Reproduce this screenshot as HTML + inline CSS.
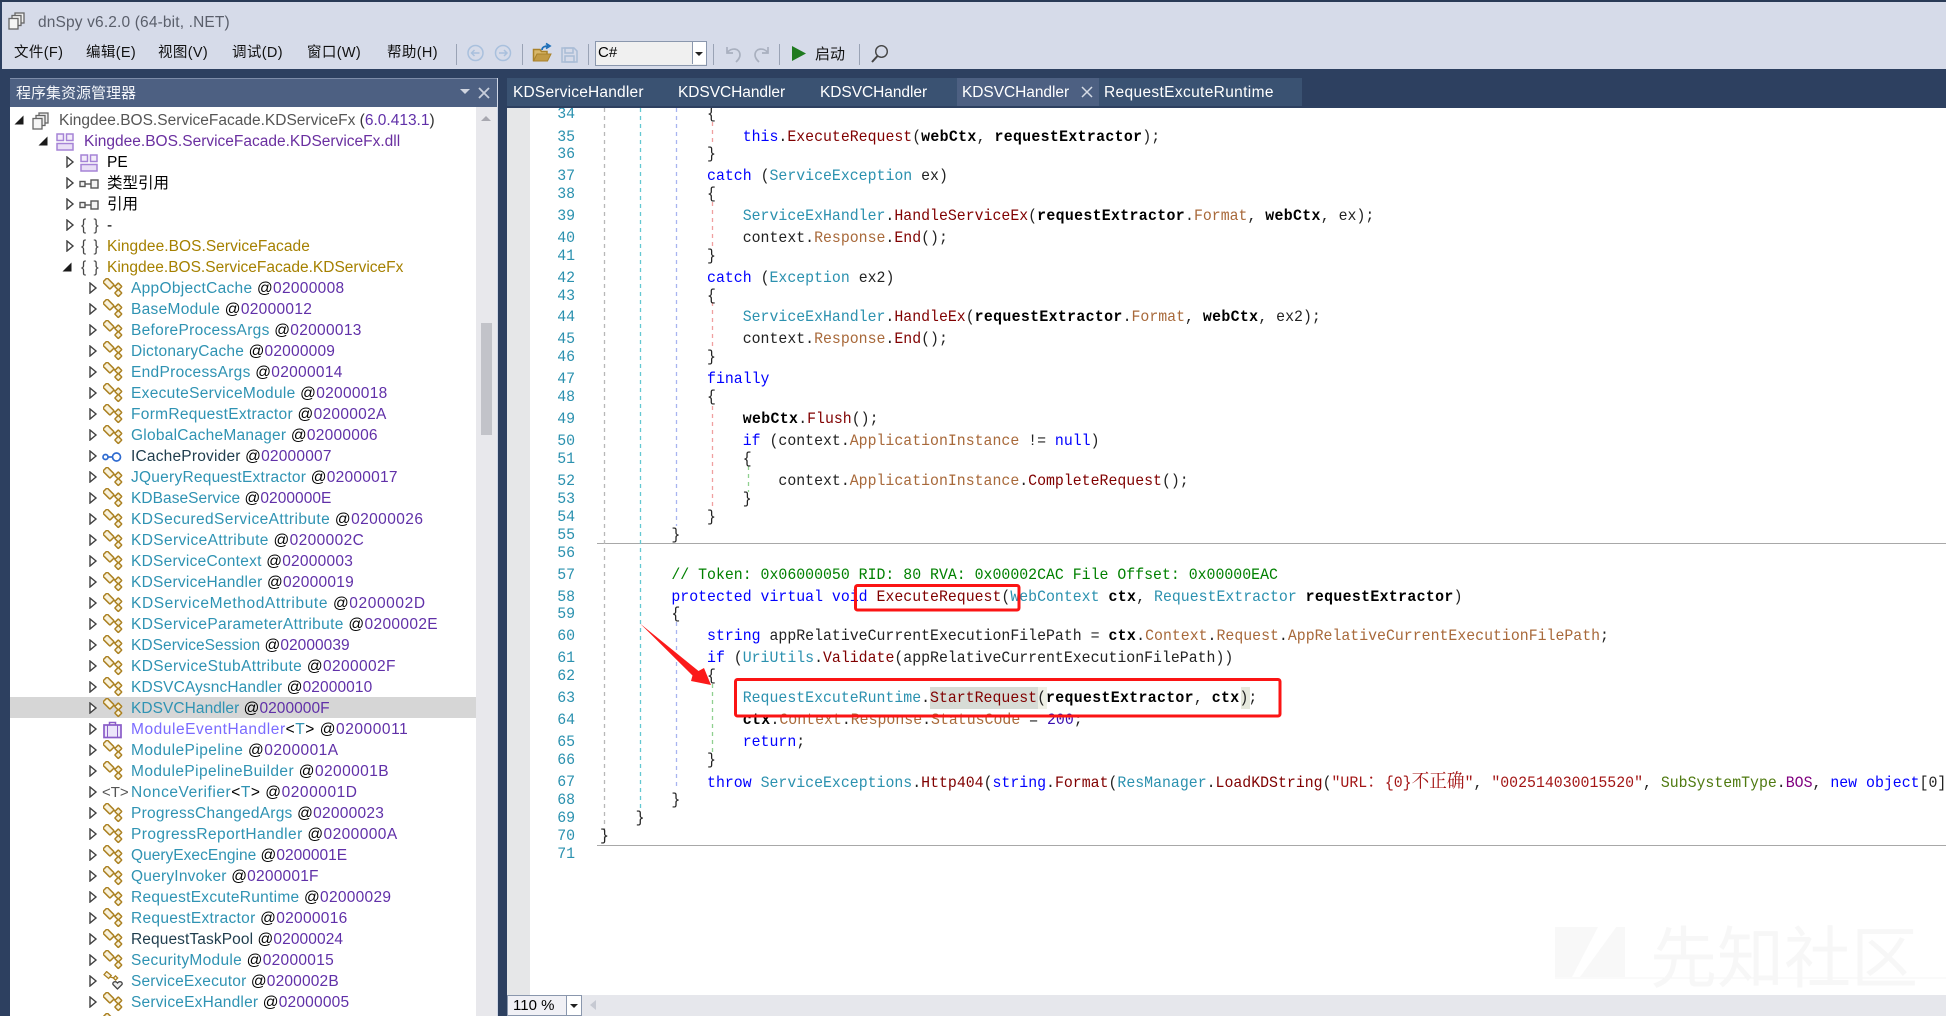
<!DOCTYPE html>
<html lang="zh"><head><meta charset="utf-8"><title>dnSpy</title>
<style>
html,body{margin:0;padding:0}
body{width:1946px;height:1016px;overflow:hidden;position:relative;background:#2d4060;font-family:"Liberation Sans","Noto Sans CJK SC",sans-serif;color:#000}
div,span,svg{box-sizing:border-box}
.abs,.m,.sep,.tb{position:absolute}
#top{left:0;top:0;width:1946px;height:2px;background:#293a56}
#bar{left:2px;top:2px;width:1944px;height:67px;background:#d6dbe9}
.m{top:42px;font-size:14.5px;line-height:22px;color:#111;white-space:nowrap;letter-spacing:.35px}
.sep{width:1px;top:44px;height:21px;background:#9aa3b5}
#panel{left:10px;top:78px;width:488px;height:938px;background:#fff;overflow:hidden}
#ph{position:absolute;left:0;top:0;width:488px;height:29px;background:#4d6082;border-top:1px solid #7d8ca8}
#tree{position:absolute;left:-10px;top:31px;width:476px}
.r{position:relative;height:21px;line-height:24px;font-size:15.5px;letter-spacing:.3px;white-space:nowrap}
.r u{text-decoration:none;color:#2f93b3}
.r s{text-decoration:none;color:#6030a8}
.r svg{position:absolute;overflow:visible;margin-top:1px}
.l0{padding-left:59px}.l1{padding-left:84px}.l2{padding-left:107px}.l3{padding-left:131px}
.e{width:10px;height:12px;top:4px}
.ns{position:absolute;left:81px;color:#444;letter-spacing:1.5px}
#sb{position:absolute;left:466px;top:29px;width:21px;height:909px;background:#e8e8ec}
#tabs{left:507px;top:78px;width:795px;height:28px;background:#3a5272}
.tb{top:78px;height:28px;line-height:30px;font-size:15.5px;color:#fff;letter-spacing:.35px;white-space:nowrap}
#ed{left:507px;top:108px;width:1439px;height:887px;background:#fff;overflow:hidden}
#gut{position:absolute;left:0;top:0;width:23px;height:887px;background:#e6e7e8}
#code{position:absolute;left:-507px;top:-108px;width:1946px;height:1016px}
.l{position:absolute;left:599.5px;width:1600px;height:20px;line-height:20px;margin-top:1px;font-family:"Liberation Mono","Noto Serif CJK SC",monospace;font-size:16px;white-space:pre;color:#222;transform:scaleX(.929);transform-origin:0 0}
.l i{position:absolute;left:-46px;top:0;font-style:normal;color:#2b91af}
.l b{color:#000;letter-spacing:.35px}
.k{color:#0000ff}.y{color:#2b91af}.f{color:#800000}.p{color:#a8693a}.c{color:#008000}.q{color:#a31515}.n{color:#3a10b0}.en{color:#4f7a10}.ev{color:#800080}
.cj{font-family:"Noto Serif CJK SC",serif;font-size:19px;line-height:16px}
.hl{position:absolute}
#botbar{left:507px;top:995px;width:1439px;height:21px;background:#e6e7ec}
#wm{left:1650px;top:919px;font-size:67px;line-height:70px;color:#f7f7f7;white-space:nowrap;font-family:"Noto Sans CJK SC",sans-serif}
</style></head><body>
<svg width="0" height="0" style="position:absolute">
<defs>
<symbol id="cl" viewBox="0 0 10 12"><path d="M1 1 7 6 1 11Z" fill="#fff" stroke="#404040" stroke-width="1.4"/></symbol>
<symbol id="op" viewBox="0 0 10 12"><path d="M9.500 1.500V10.500H.5Z" fill="#1a1a1a"/></symbol>
<symbol id="k" viewBox="0 0 20 20"><g fill="#f9f2dc" stroke="#ab8122" stroke-width="1.500"><path d="M8 7 15.300 8.500V15" fill="none"/><rect x=".5" y="2.500" width="10" height="6" rx="1" transform="rotate(45 5.500 5.500)"/><rect x="12.800" y="6" width="5" height="5" rx=".7" transform="rotate(45 15.300 8.500)"/><rect x="12.800" y="12.500" width="5" height="5" rx=".7" transform="rotate(45 15.300 15)"/></g></symbol>
<symbol id="as" viewBox="0 0 18 18"><g fill="#f0f0f0" stroke="#666" stroke-width="1.300"><rect x="7" y="1" width="9" height="10"/><rect x="4" y="3.500" width="9" height="10"/><rect x="1" y="6.500" width="9" height="10.500" fill="#f5f5f5"/></g></symbol>
<symbol id="dl" viewBox="0 0 18 18"><g fill="#f3ecfa" stroke="#a583d6" stroke-width="1.500"><rect x="1" y="1" width="6.500" height="6.500"/><rect x="10.500" y="1" width="6.500" height="6.500"/><rect x="1" y="10.500" width="16" height="6.500" fill="#e9dff6"/></g></symbol>
<symbol id="rf" viewBox="0 0 20 14"><g fill="#f3f3f3" stroke="#555" stroke-width="1.400"><path d="M6 7H12"/><rect x="1" y="4.500" width="5" height="5"/><rect x="12" y="3" width="7" height="8"/></g></symbol>
<symbol id="bc" viewBox="0 0 20 20"><rect x="1" y="5" width="17" height="12.500" fill="#ece6fa" stroke="#8a5cc8" stroke-width="1.700"/><path d="M6.500 5V2.500H12.500V5" fill="none" stroke="#8a5cc8" stroke-width="1.500"/><path d="M4.500 5V17.500M14.500 5V17.500" stroke="#8a5cc8" stroke-width="1"/></symbol>
<symbol id="if" viewBox="0 0 20 12"><g fill="#fff" stroke="#2f6bd0" stroke-width="1.700"><path d="M6 6H13"/><circle cx="3.500" cy="6" r="2.500"/><circle cx="14.500" cy="6" r="4"/></g></symbol>
<symbol id="hb" viewBox="0 0 20 20"><g fill="#f9f2dc" stroke="#ab8122" stroke-width="1.300"><path d="M7 6 13 7.500" fill="none"/><rect x="1.500" y="2" width="6" height="4" transform="rotate(40 4.500 4.200)"/><rect x="11" y="5.500" width="3" height="3" transform="rotate(45 12.500 7)"/></g><path d="M14.500 18 10 13.500C9 11 12.500 9.500 14.500 12 16.500 9.500 20 11 19 13.500Z" fill="#eee" stroke="#444" stroke-width="1.300"/></symbol>
</defs></svg>

<div class="abs" id="top"></div>
<div class="abs" id="bar"></div>
<svg class="abs" style="left:8px;top:12px" width="18" height="18"><use href="#as"/></svg>
<div class="abs" style="left:38px;top:12px;font-size:15.5px;line-height:22px;color:#5a5f6b;letter-spacing:.15px;white-space:nowrap">dnSpy v6.2.0 (64-bit, .NET)</div>
<div class="m" style="left:14px">文件(F)</div>
<div class="m" style="left:86px">编辑(E)</div>
<div class="m" style="left:158px">视图(V)</div>
<div class="m" style="left:232px">调试(D)</div>
<div class="m" style="left:307px">窗口(W)</div>
<div class="m" style="left:387px">帮助(H)</div>
<div class="sep" style="left:456px"></div><div class="sep" style="left:522px"></div><div class="sep" style="left:588px"></div><div class="sep" style="left:713px"></div><div class="sep" style="left:779px"></div><div class="sep" style="left:859px"></div>
<svg class="abs" style="left:460px;top:40px" width="440" height="28" viewBox="460 40 440 28" fill="none">
<g stroke="#a9c0dd" stroke-width="1.500"><circle cx="475.500" cy="53" r="7.500"/><path d="M479.500 53H471.500M474.500 50 471.500 53 474.500 56"/><circle cx="503" cy="53" r="7.500"/><path d="M499 53H507M504 50 507 53 504 56"/></g>
<path d="M533.500 61V49.500H540L541.500 51.500H547V54" stroke="#a9822a" stroke-width="1.500" fill="#d8b76a"/><path d="M533.500 61 537 54H551L547.500 61Z" fill="#c19a45" stroke="#a9822a"/>
<path d="M542 50C542 47 545 46 548 46M546 43.500 550 46 546 48.500" stroke="#1e6fb8" stroke-width="1.700"/>
<g stroke="#a9bcd6" stroke-width="1.500"><path d="M562 48H574L577 51V62H562Z"/><rect x="565" y="48" width="8" height="5"/><rect x="565" y="56" width="9" height="6"/></g>
<path d="M727 47V53H733M727 53C731 47 740 48 740 55 740 58 738 60 736 62" stroke="#a9b0bf" stroke-width="1.700"/>
<path d="M768 47V53H762M768 53C764 47 755 48 755 55 755 58 757 60 759 62" stroke="#a9b0bf" stroke-width="1.700"/>
<path d="M792 46 806 53.500 792 61Z" fill="#1f7a1f"/>
<circle cx="881.500" cy="51.500" r="5.800" stroke="#444" stroke-width="1.400"/><path d="M877.500 56 872 62" stroke="#444" stroke-width="2"/>
</svg>
<div class="abs" style="left:595px;top:41px;width:112px;height:25px;background:#f0f0f0;border:1.500px solid #8a97ad;font-size:15px;line-height:21px;padding-left:2px">C#<div class="abs" style="left:96px;top:0;width:14px;height:22px;background:#fff;border-left:1px solid #8a97ad"></div><div class="abs" style="left:99px;top:10px;border:4px solid transparent;border-top:4px solid #222;border-bottom:0"></div></div>
<div class="m" style="left:815px;top:44px;font-size:15px;letter-spacing:0">启动</div>

<div class="abs" id="panel">
<div id="ph"><div class="abs" style="left:6px;top:4px;font-size:15px;line-height:22px;color:#f4f6fa;white-space:nowrap">程序集资源管理器</div>
<div class="abs" style="left:450px;top:10px;border:5px solid transparent;border-top:5px solid #d0d5e0;border-bottom:0"></div>
<svg class="abs" style="left:467px;top:8px" width="14" height="12"><path d="M2 1 12 11M12 1 2 11" stroke="#c8cedb" stroke-width="1.800"/></svg></div>
<div id="sb"><div class="abs" style="left:5px;top:9px;border:5.500px solid transparent;border-bottom:5.500px solid #a8a8b0;border-top:0"></div><div class="abs" style="left:5px;top:216px;width:11px;height:112px;background:#c2c3c9"></div></div>
<div class="abs" style="left:487px;top:0;width:1px;height:938px;background:#cfd6e5"></div>
<div id="tree">
<div class="r l0" style="letter-spacing:0"><svg class="e" style="left:14px"><use href="#op"/></svg><svg style="left:32px;top:2px" width="18" height="18"><use href="#as"/></svg><u style="color:#555">Kingdee.BOS.ServiceFacade.KDServiceFx</u> <span style="color:#333">(</span><s>6.0.413.1</s><span style="color:#333">)</span></div>
<div class="r l1" style="letter-spacing:0"><svg class="e" style="left:38px"><use href="#op"/></svg><svg style="left:56px;top:2px" width="18" height="18"><use href="#dl"/></svg><s style="color:#6a2fa0">Kingdee.BOS.ServiceFacade.KDServiceFx.dll</s></div>
<div class="r l2" style="letter-spacing:0"><svg class="e" style="left:66px"><use href="#cl"/></svg><svg style="left:80px;top:2px" width="18" height="18"><use href="#dl"/></svg>PE</div>
<div class="r l2" style="letter-spacing:0"><svg class="e" style="left:66px"><use href="#cl"/></svg><svg style="left:79px;top:4px" width="20" height="14"><use href="#rf"/></svg>类型引用</div>
<div class="r l2" style="letter-spacing:0"><svg class="e" style="left:66px"><use href="#cl"/></svg><svg style="left:79px;top:4px" width="20" height="14"><use href="#rf"/></svg>引用</div>
<div class="r l2"><svg class="e" style="left:66px"><use href="#cl"/></svg><span class="ns">{ }</span>-</div>
<div class="r l2" style="letter-spacing:.05px"><svg class="e" style="left:66px"><use href="#cl"/></svg><span class="ns">{ }</span><u style="color:#a58000">Kingdee.BOS.ServiceFacade</u></div>
<div class="r l2" style="letter-spacing:0"><svg class="e" style="left:62px"><use href="#op"/></svg><span class="ns">{ }</span><u style="color:#a58000">Kingdee.BOS.ServiceFacade.KDServiceFx</u></div>
<div class="r l3"><svg class="e" style="left:89px"><use href="#cl"/></svg><svg style="left:103px;top:0" width="20" height="20"><use href="#k"/></svg><u>AppObjectCache</u> @<s>02000008</s></div>
<div class="r l3"><svg class="e" style="left:89px"><use href="#cl"/></svg><svg style="left:103px;top:0" width="20" height="20"><use href="#k"/></svg><u>BaseModule</u> @<s>02000012</s></div>
<div class="r l3"><svg class="e" style="left:89px"><use href="#cl"/></svg><svg style="left:103px;top:0" width="20" height="20"><use href="#k"/></svg><u>BeforeProcessArgs</u> @<s>02000013</s></div>
<div class="r l3" style="letter-spacing:.2px"><svg class="e" style="left:89px"><use href="#cl"/></svg><svg style="left:103px;top:0" width="20" height="20"><use href="#k"/></svg><u>DictonaryCache</u> @<s>02000009</s></div>
<div class="r l3"><svg class="e" style="left:89px"><use href="#cl"/></svg><svg style="left:103px;top:0" width="20" height="20"><use href="#k"/></svg><u>EndProcessArgs</u> @<s>02000014</s></div>
<div class="r l3"><svg class="e" style="left:89px"><use href="#cl"/></svg><svg style="left:103px;top:0" width="20" height="20"><use href="#k"/></svg><u>ExecuteServiceModule</u> @<s>02000018</s></div>
<div class="r l3"><svg class="e" style="left:89px"><use href="#cl"/></svg><svg style="left:103px;top:0" width="20" height="20"><use href="#k"/></svg><u>FormRequestExtractor</u> @<s>0200002A</s></div>
<div class="r l3" style="letter-spacing:.25px"><svg class="e" style="left:89px"><use href="#cl"/></svg><svg style="left:103px;top:0" width="20" height="20"><use href="#k"/></svg><u>GlobalCacheManager</u> @<s>02000006</s></div>
<div class="r l3" style="letter-spacing:.2px"><svg class="e" style="left:89px"><use href="#cl"/></svg><svg style="left:102px;top:5px" width="20" height="12"><use href="#if"/></svg><u style="color:#1f3d4d">ICacheProvider</u> @<s>02000007</s></div>
<div class="r l3" style="letter-spacing:.25px"><svg class="e" style="left:89px"><use href="#cl"/></svg><svg style="left:103px;top:0" width="20" height="20"><use href="#k"/></svg><u>JQueryRequestExtractor</u> @<s>02000017</s></div>
<div class="r l3" style="letter-spacing:.05px"><svg class="e" style="left:89px"><use href="#cl"/></svg><svg style="left:103px;top:0" width="20" height="20"><use href="#k"/></svg><u>KDBaseService</u> @<s>0200000E</s></div>
<div class="r l3" style="letter-spacing:.42px"><svg class="e" style="left:89px"><use href="#cl"/></svg><svg style="left:103px;top:0" width="20" height="20"><use href="#k"/></svg><u>KDSecuredServiceAttribute</u> @<s>02000026</s></div>
<div class="r l3" style="letter-spacing:.38px"><svg class="e" style="left:89px"><use href="#cl"/></svg><svg style="left:103px;top:0" width="20" height="20"><use href="#k"/></svg><u>KDServiceAttribute</u> @<s>0200002C</s></div>
<div class="r l3" style="letter-spacing:.25px"><svg class="e" style="left:89px"><use href="#cl"/></svg><svg style="left:103px;top:0" width="20" height="20"><use href="#k"/></svg><u>KDServiceContext</u> @<s>02000003</s></div>
<div class="r l3" style="letter-spacing:.25px"><svg class="e" style="left:89px"><use href="#cl"/></svg><svg style="left:103px;top:0" width="20" height="20"><use href="#k"/></svg><u>KDServiceHandler</u> @<s>02000019</s></div>
<div class="r l3" style="letter-spacing:.6px"><svg class="e" style="left:89px"><use href="#cl"/></svg><svg style="left:103px;top:0" width="20" height="20"><use href="#k"/></svg><u>KDServiceMethodAttribute</u> @<s>0200002D</s></div>
<div class="r l3" style="letter-spacing:.35px"><svg class="e" style="left:89px"><use href="#cl"/></svg><svg style="left:103px;top:0" width="20" height="20"><use href="#k"/></svg><u>KDServiceParameterAttribute</u> @<s>0200002E</s></div>
<div class="r l3" style="letter-spacing:.05px"><svg class="e" style="left:89px"><use href="#cl"/></svg><svg style="left:103px;top:0" width="20" height="20"><use href="#k"/></svg><u>KDServiceSession</u> @<s>02000039</s></div>
<div class="r l3" style="letter-spacing:.38px"><svg class="e" style="left:89px"><use href="#cl"/></svg><svg style="left:103px;top:0" width="20" height="20"><use href="#k"/></svg><u>KDServiceStubAttribute</u> @<s>0200002F</s></div>
<div class="r l3" style="letter-spacing:.1px"><svg class="e" style="left:89px"><use href="#cl"/></svg><svg style="left:103px;top:0" width="20" height="20"><use href="#k"/></svg><u>KDSVCAysncHandler</u> @<s>02000010</s></div>
<div class="r l3" style="background:#d6d6d6;letter-spacing:.05px"><svg class="e" style="left:89px"><use href="#cl"/></svg><svg style="left:103px;top:0" width="20" height="20"><use href="#k"/></svg><u>KDSVCHandler</u> @<s>0200000F</s></div>
<div class="r l3" style="letter-spacing:.55px"><svg class="e" style="left:89px"><use href="#cl"/></svg><svg style="left:103px;top:1px" width="20" height="20"><use href="#bc"/></svg><u style="color:#7a6bff">ModuleEventHandler</u>&lt;<u>T</u>&gt; @<s>02000011</s></div>
<div class="r l3" style="letter-spacing:.45px"><svg class="e" style="left:89px"><use href="#cl"/></svg><svg style="left:103px;top:0" width="20" height="20"><use href="#k"/></svg><u>ModulePipeline</u> @<s>0200001A</s></div>
<div class="r l3" style="letter-spacing:.42px"><svg class="e" style="left:89px"><use href="#cl"/></svg><svg style="left:103px;top:0" width="20" height="20"><use href="#k"/></svg><u>ModulePipelineBuilder</u> @<s>0200001B</s></div>
<div class="r l3" style="letter-spacing:.55px"><svg class="e" style="left:89px"><use href="#cl"/></svg><span class="abs" style="left:102px;color:#555;letter-spacing:0;font-size:15px">&lt;T&gt;</span><u>NonceVerifier</u>&lt;<u>T</u>&gt; @<s>0200001D</s></div>
<div class="r l3" style="letter-spacing:.25px"><svg class="e" style="left:89px"><use href="#cl"/></svg><svg style="left:103px;top:0" width="20" height="20"><use href="#k"/></svg><u>ProgressChangedArgs</u> @<s>02000023</s></div>
<div class="r l3" style="letter-spacing:.42px"><svg class="e" style="left:89px"><use href="#cl"/></svg><svg style="left:103px;top:0" width="20" height="20"><use href="#k"/></svg><u>ProgressReportHandler</u> @<s>0200000A</s></div>
<div class="r l3" style="letter-spacing:.02px"><svg class="e" style="left:89px"><use href="#cl"/></svg><svg style="left:103px;top:0" width="20" height="20"><use href="#k"/></svg><u>QueryExecEngine</u> @<s>0200001E</s></div>
<div class="r l3" style="letter-spacing:.22px"><svg class="e" style="left:89px"><use href="#cl"/></svg><svg style="left:103px;top:0" width="20" height="20"><use href="#k"/></svg><u>QueryInvoker</u> @<s>0200001F</s></div>
<div class="r l3" style="letter-spacing:.28px"><svg class="e" style="left:89px"><use href="#cl"/></svg><svg style="left:103px;top:0" width="20" height="20"><use href="#k"/></svg><u>RequestExcuteRuntime</u> @<s>02000029</s></div>
<div class="r l3"><svg class="e" style="left:89px"><use href="#cl"/></svg><svg style="left:103px;top:0" width="20" height="20"><use href="#k"/></svg><u>RequestExtractor</u> @<s>02000016</s></div>
<div class="r l3" style="letter-spacing:.1px"><svg class="e" style="left:89px"><use href="#cl"/></svg><svg style="left:103px;top:0" width="20" height="20"><use href="#k"/></svg><u style="color:#1f3d4d">RequestTaskPool</u> @<s>02000024</s></div>
<div class="r l3"><svg class="e" style="left:89px"><use href="#cl"/></svg><svg style="left:103px;top:0" width="20" height="20"><use href="#k"/></svg><u>SecurityModule</u> @<s>02000015</s></div>
<div class="r l3" style="letter-spacing:.17px"><svg class="e" style="left:89px"><use href="#cl"/></svg><svg style="left:103px;top:0" width="20" height="20"><use href="#hb"/></svg><u>ServiceExecutor</u> @<s>0200002B</s></div>
<div class="r l3" style="letter-spacing:.2px"><svg class="e" style="left:89px"><use href="#cl"/></svg><svg style="left:103px;top:0" width="20" height="20"><use href="#k"/></svg><u>ServiceExHandler</u> @<s>02000005</s></div>
<div class="r l3"><svg class="e" style="left:89px"><use href="#cl"/></svg><svg style="left:103px;top:0" width="20" height="20"><use href="#k"/></svg></div>
</div></div>

<div class="abs" id="tabs"></div>
<div class="abs" style="left:957px;top:78px;width:142px;height:28px;background:#4d6082"></div>
<div class="tb" style="left:513px;letter-spacing:.2px">KDServiceHandler</div>
<div class="tb" style="left:678px;letter-spacing:-.05px">KDSVCHandler</div>
<div class="tb" style="left:820px;letter-spacing:-.05px">KDSVCHandler</div>
<div class="tb" style="left:962px;letter-spacing:-.05px">KDSVCHandler</div>
<svg class="abs" style="left:1080px;top:86px" width="14" height="13"><path d="M2 1 12 11M12 1 2 11" stroke="#d6dbe5" stroke-width="1.500"/></svg>
<div class="tb" style="left:1104px">RequestExcuteRuntime</div>

<div class="abs" id="ed">
<div id="gut"></div>
<div id="code">
<div class="hl" style="left:930px;top:687px;width:108px;height:22px;background:#d7dcd6"></div>
<div class="hl" style="left:1038px;top:687px;width:9px;height:22px;background:#eef0e6"></div>
<div class="hl" style="left:1241px;top:687px;width:9px;height:22px;background:#e6e9dd"></div>
<svg style="position:absolute;left:0;top:0" width="1946" height="1016" fill="none">
<path d="M597 543.500H1946M597 845.500H1946" stroke="#a8a8a8"/>
<g stroke-width="1.300" stroke-dasharray="4 4">
<path d="M604.500 108V842" stroke="#b8b8b8"/>
<path d="M640.500 108V810" stroke="#64c8d2"/>
<path d="M676.500 108V526M676.500 622V790" stroke="#a8b4f0"/>
<path d="M712.500 122V146M712.500 202V248M712.500 302V348M712.500 406V510" stroke="#f0a0a0"/>
<path d="M748.500 466V492M712.500 684V752" stroke="#90d090"/>
</g></svg>
<div class="l" style="top:103px"><i>34</i>            {</div>
<div class="l" style="top:126px"><i>35</i>                <span class="k">this</span>.<span class="f">ExecuteRequest</span>(<b>webCtx</b>, <b>requestExtractor</b>);</div>
<div class="l" style="top:143px"><i>36</i>            }</div>
<div class="l" style="top:165px"><i>37</i>            <span class="k">catch</span> (<span class="y">ServiceException</span> ex)</div>
<div class="l" style="top:183px"><i>38</i>            {</div>
<div class="l" style="top:205px"><i>39</i>                <span class="y">ServiceExHandler</span>.<span class="f">HandleServiceEx</span>(<b>requestExtractor</b>.<span class="p">Format</span>, <b>webCtx</b>, ex);</div>
<div class="l" style="top:227px"><i>40</i>                context.<span class="p">Response</span>.<span class="f">End</span>();</div>
<div class="l" style="top:245px"><i>41</i>            }</div>
<div class="l" style="top:267px"><i>42</i>            <span class="k">catch</span> (<span class="y">Exception</span> ex2)</div>
<div class="l" style="top:285px"><i>43</i>            {</div>
<div class="l" style="top:306px"><i>44</i>                <span class="y">ServiceExHandler</span>.<span class="f">HandleEx</span>(<b>requestExtractor</b>.<span class="p">Format</span>, <b>webCtx</b>, ex2);</div>
<div class="l" style="top:328px"><i>45</i>                context.<span class="p">Response</span>.<span class="f">End</span>();</div>
<div class="l" style="top:346px"><i>46</i>            }</div>
<div class="l" style="top:368px"><i>47</i>            <span class="k">finally</span></div>
<div class="l" style="top:386px"><i>48</i>            {</div>
<div class="l" style="top:408px"><i>49</i>                <b>webCtx</b>.<span class="f">Flush</span>();</div>
<div class="l" style="top:430px"><i>50</i>                <span class="k">if</span> (context.<span class="p">ApplicationInstance</span> != <span class="k">null</span>)</div>
<div class="l" style="top:448px"><i>51</i>                {</div>
<div class="l" style="top:470px"><i>52</i>                    context.<span class="p">ApplicationInstance</span>.<span class="f">CompleteRequest</span>();</div>
<div class="l" style="top:488px"><i>53</i>                }</div>
<div class="l" style="top:506px"><i>54</i>            }</div>
<div class="l" style="top:524px"><i>55</i>        }</div>
<div class="l" style="top:542px"><i>56</i></div>
<div class="l" style="top:564px"><i>57</i>        <span class="c">// Token: 0x06000050 RID: 80 RVA: 0x00002CAC File Offset: 0x00000EAC</span></div>
<div class="l" style="top:586px"><i>58</i>        <span class="k">protected virtual void</span> <span class="f">ExecuteRequest</span>(<span class="y">WebContext</span> <b>ctx</b>, <span class="y">RequestExtractor</span> <b>requestExtractor</b>)</div>
<div class="l" style="top:603px"><i>59</i>        {</div>
<div class="l" style="top:625px"><i>60</i>            <span class="k">string</span> appRelativeCurrentExecutionFilePath = <b>ctx</b>.<span class="p">Context</span>.<span class="p">Request</span>.<span class="p">AppRelativeCurrentExecutionFilePath</span>;</div>
<div class="l" style="top:647px"><i>61</i>            <span class="k">if</span> (<span class="y">UriUtils</span>.<span class="f">Validate</span>(appRelativeCurrentExecutionFilePath))</div>
<div class="l" style="top:665px"><i>62</i>            {</div>
<div class="l" style="top:687px"><i>63</i>                <span class="y">RequestExcuteRuntime</span>.<span class="f">StartRequest</span>(<b>requestExtractor</b>, <b>ctx</b>);</div>
<div class="l" style="top:709px"><i>64</i>                <b>ctx</b>.<span class="p">Context</span>.<span class="p">Response</span>.<span class="p">StatusCode</span> = <span class="n">200</span>;</div>
<div class="l" style="top:731px"><i>65</i>                <span class="k">return</span>;</div>
<div class="l" style="top:749px"><i>66</i>            }</div>
<div class="l" style="top:771px"><i>67</i>            <span class="k">throw</span> <span class="y">ServiceExceptions</span>.<span class="f">Http404</span>(<span class="k">string</span>.<span class="f">Format</span>(<span class="y">ResManager</span>.<span class="f">LoadKDString</span>(<span class="q">"URL<span class="cj">：</span>{0}<span class="cj">不正确</span>"</span>, <span class="q">"002514030015520"</span>, <span class="en">SubSystemType</span>.<span class="ev">BOS</span>, <span class="k">new</span> <span class="k">object</span>[0]));</div>
<div class="l" style="top:789px"><i>68</i>        }</div>
<div class="l" style="top:807px"><i>69</i>    }</div>
<div class="l" style="top:825px"><i>70</i>}</div>
<div class="l" style="top:843px"><i>71</i></div>
</div>
<svg class="abs" style="left:1048px;top:819px;position:absolute" width="90" height="60" viewBox="1555 927 90 60"><path d="M1555 927H1598L1572 977H1555ZM1625 915V977H1580Z" fill="#f8f8f8"/><path d="M1555 978H1646" stroke="#f5f5f5"/></svg>
<svg class="abs" style="left:1138px;top:869px;position:absolute" width="301" height="2"><path d="M0 1H301" stroke="#f4f4f4"/></svg>
</div>
<div class="abs" id="wm">先知社区</div>

<div class="abs" id="botbar"></div>
<div class="abs" style="left:507px;top:995px;width:75px;height:21px;background:#f0f0f5;border:1px solid #8a97ad;font-size:15px;line-height:19px;padding-left:5px;white-space:nowrap">110 %<div class="abs" style="left:58px;top:0;width:15px;height:19px;background:#fff;border-left:1px solid #8a97ad"></div><div class="abs" style="left:62px;top:8px;border:4px solid transparent;border-top:4px solid #222;border-bottom:0"></div></div>
<div class="abs" style="left:590px;top:1000px;border:5.500px solid transparent;border-right:6px solid #c6c9d2;border-left:0"></div>

<svg class="abs" style="left:0;top:0;z-index:5" width="1946" height="1016" fill="none">
<rect x="855.500" y="585.500" width="163.500" height="24.500" rx="2" stroke="#fb1414" stroke-width="3"/>
<rect x="735.500" y="679.500" width="544.500" height="36.500" rx="2" stroke="#fb1414" stroke-width="3"/>
<path d="M640 623.500 698.500 671 704 668 711 685 691 681 692.500 675.500Z" fill="#fb1a1a"/>
</svg>
</body></html>
